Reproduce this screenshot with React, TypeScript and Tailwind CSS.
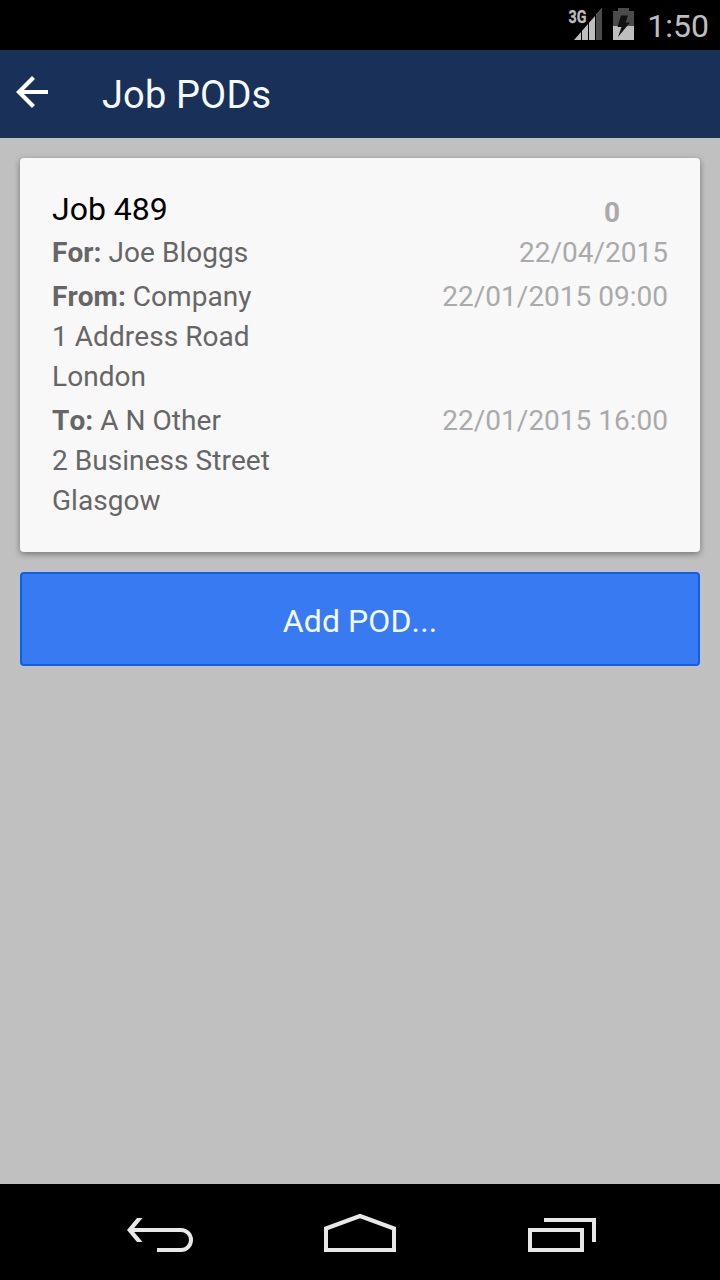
import React from "react";

type RowProps = { label: string; name: string; date: string; lines?: string[] };

function Row({ label, name, date, lines = [] }: RowProps) {
  return (
    <div className="flex justify-between">
      <div className="tracking-[0.05px] text-[#666666]">
        <div>
          <b className="font-bold">{label}</b> {name}
        </div>
        {lines.map((line) => (
          <div key={line}>{line}</div>
        ))}
      </div>
      <div className="text-[#aaaaaa]">{date}</div>
    </div>
  );
}

function StatusBar() {
  return (
    <div className="flex h-[50px] shrink-0 justify-end bg-black pr-[11px] text-[#bebebe]">
      <svg width="80" height="50" viewBox="-2 0 80 50" className="shrink-0" aria-hidden="true">
        <path d="M5 40L33 8V40Z" fill="#bebebe" />
        <path d="M27 14.8L33 8V40H27Z" fill="#4b4b4b" />
        <path d="M12.500 30V40M19.500 22V40M26.500 14V40" stroke="#000" strokeWidth="1" />
        <path d="M0 5H18V24.5H0Z" fill="#000" />
        <text x="-0.5" y="23" fontSize="18" fontWeight="700" fill="#bebebe" stroke="#bebebe" strokeWidth="0.3" textLength="18" lengthAdjust="spacingAndGlyphs">3G</text>
        <path d="M44 11H49V8H60V11H65V26H44Z" fill="#4b4b4b" />
        <path d="M44 26H65V40H44Z" fill="#bebebe" />
        <path d="M52 15.500H59L56.500 22.500H61L49 37L52.500 27H48.500Z" fill="#111" />
      </svg>
      <span className="mt-[6px] w-[62px] text-right text-[32px] leading-10 whitespace-nowrap">1:50</span>
    </div>
  );
}

function NavigationBar() {
  return (
    <nav className="flex h-24 shrink-0 items-start bg-black pl-[110px]">
      <svg width="100" height="96" viewBox="110 1184 100 96" fill="none" stroke="#e8e8e8" strokeWidth="4" aria-hidden="true">
        <path d="M131 1230H181C186.500 1230 191 1234.500 191 1240S186.500 1250 181 1250H157" />
        <path d="M127 1230L137 1218H142.500L132.500 1230L142.500 1242H137Z" fill="#e8e8e8" stroke="none" />
      </svg>
      <svg width="100" height="96" viewBox="310 1184 100 96" className="ml-[100px]" fill="none" stroke="#e8e8e8" strokeWidth="4" aria-hidden="true">
        <path d="M326 1250V1228.500L360 1216L394 1228.500V1250Z" />
      </svg>
      <svg width="100" height="96" viewBox="510 1184 100 96" className="ml-[100px]" fill="none" stroke="#e8e8e8" strokeWidth="4" aria-hidden="true">
        <path d="M530 1230H582V1250H530Z" />
        <path d="M544 1220H594V1242" />
      </svg>
    </nav>
  );
}

export default function App() {
  return (
    <div className="flex h-[1280px] w-[720px] flex-col bg-[#c0c0c0] font-['Roboto',sans-serif] [font-kerning:none]">
      <StatusBar />
      <header className="flex h-[88px] shrink-0 items-center bg-[#193058] text-[#f5faff]">
        <svg width="102" height="88" viewBox="0 0 102 88" fill="none" stroke="#fff" strokeWidth="4.200" aria-hidden="true">
          <path d="M48 42H19M33.500 27.500L19 42L33.500 56.500" />
        </svg>
        <h1 className="pt-0.5 text-[38px] leading-[44px] tracking-[0.15px]">Job PODs</h1>
      </header>
      <main className="flex grow flex-col gap-5 p-5">
        <section className="flex h-[394px] flex-col rounded-[4px] bg-[#f8f8f8] p-8 text-[28px] leading-10 shadow-[0_2px_6px_rgba(0,0,0,0.4)]">
          <div className="flex h-[43px] justify-between">
            <h2 className="text-[32px] leading-[38px] text-black">Job 489</h2>
            <span className="pt-[3px] pr-12 font-bold text-[#aaaaaa]">0</span>
          </div>
          <div className="flex flex-col gap-1">
            <Row label="For:" name="Joe Bloggs" date="22/04/2015" />
            <Row label="From:" name="Company" date="22/01/2015 09:00" lines={["1 Address Road", "London"]} />
            <Row label="To:" name="A N Other" date="22/01/2015 16:00" lines={["2 Business Street", "Glasgow"]} />
          </div>
        </section>
        <button className="h-[94px] rounded-[4px] border-2 border-[#0c60ee] bg-[#387af2] pt-1 text-[32px] leading-10 tracking-[0.1px] text-[#f2f8ff]">
          Add POD...
        </button>
      </main>
      <NavigationBar />
    </div>
  );
}
